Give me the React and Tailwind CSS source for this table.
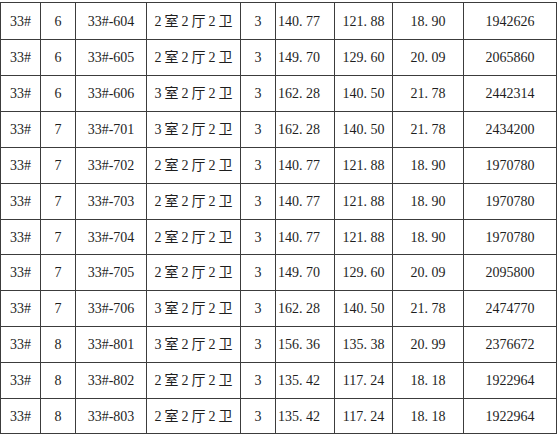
import React from "react";

const rows = [
  ["33#", "6", "33#-604", "2室2厅2卫", "3", "140.77", "121.88", "18.90", "1942626"],
  ["33#", "6", "33#-605", "2室2厅2卫", "3", "149.70", "129.60", "20.09", "2065860"],
  ["33#", "6", "33#-606", "3室2厅2卫", "3", "162.28", "140.50", "21.78", "2442314"],
  ["33#", "7", "33#-701", "3室2厅2卫", "3", "162.28", "140.50", "21.78", "2434200"],
  ["33#", "7", "33#-702", "2室2厅2卫", "3", "140.77", "121.88", "18.90", "1970780"],
  ["33#", "7", "33#-703", "2室2厅2卫", "3", "140.77", "121.88", "18.90", "1970780"],
  ["33#", "7", "33#-704", "2室2厅2卫", "3", "140.77", "121.88", "18.90", "1970780"],
  ["33#", "7", "33#-705", "2室2厅2卫", "3", "149.70", "129.60", "20.09", "2095800"],
  ["33#", "7", "33#-706", "3室2厅2卫", "3", "162.28", "140.50", "21.78", "2474770"],
  ["33#", "8", "33#-801", "3室2厅2卫", "3", "156.36", "135.38", "20.99", "2376672"],
  ["33#", "8", "33#-802", "2室2厅2卫", "3", "135.42", "117.24", "18.18", "1922964"],
  ["33#", "8", "33#-803", "2室2厅2卫", "3", "135.42", "117.24", "18.18", "1922964"],
];

const rowH = [
  "h-[37px]", "h-[36px]", "h-[36px]", "h-[36px]", "h-[36px]", "h-[36px]",
  "h-[35px]", "h-[36px]", "h-[36px]", "h-[36px]", "h-[36px]", "h-[35px]",
];

const colW = [
  "w-[40px]", "w-[35px]", "w-[71px]", "w-[94px]", "w-[35px]",
  "w-[59px]", "w-[58px]", "w-[71px]", "w-[93px]",
];

function Num({ v }) {
  const i = v.indexOf(".");
  if (i < 0) return <>{v}</>;
  return (
    <>
      {v.slice(0, i)}
      <span className="mr-[3.5px]">.</span>
      {v.slice(i + 1)}
    </>
  );
}

export default function App() {
  return (
    <div
      className="w-[560px] h-[436px] bg-white pt-[2px] text-[14px] text-[#1e1e1e]"
      style={{ fontFamily: '"Liberation Serif", "Noto Sans CJK SC", serif' }}
    >
      <div className="w-[557px] border-l border-t border-[#3c3c3c] flex flex-col">
        {rows.map((r, ri) => (
          <div key={ri} className={`flex border-b border-[#3c3c3c] ${rowH[ri]}`}>
            {r.map((c, ci) => (
              <div
                key={ci}
                className={`${colW[ci]} shrink-0 border-r border-[#3c3c3c] flex items-center justify-center ${
                  ci === 5 ? "justify-start pl-[2px]" : ""
                }`}
              >
                {ci === 3 ? (
                  <span className="tracking-[3px] mr-[-3px]">{c}</span>
                ) : (
                  <span>
                    <Num v={c} />
                  </span>
                )}
              </div>
            ))}
          </div>
        ))}
      </div>
    </div>
  );
}
